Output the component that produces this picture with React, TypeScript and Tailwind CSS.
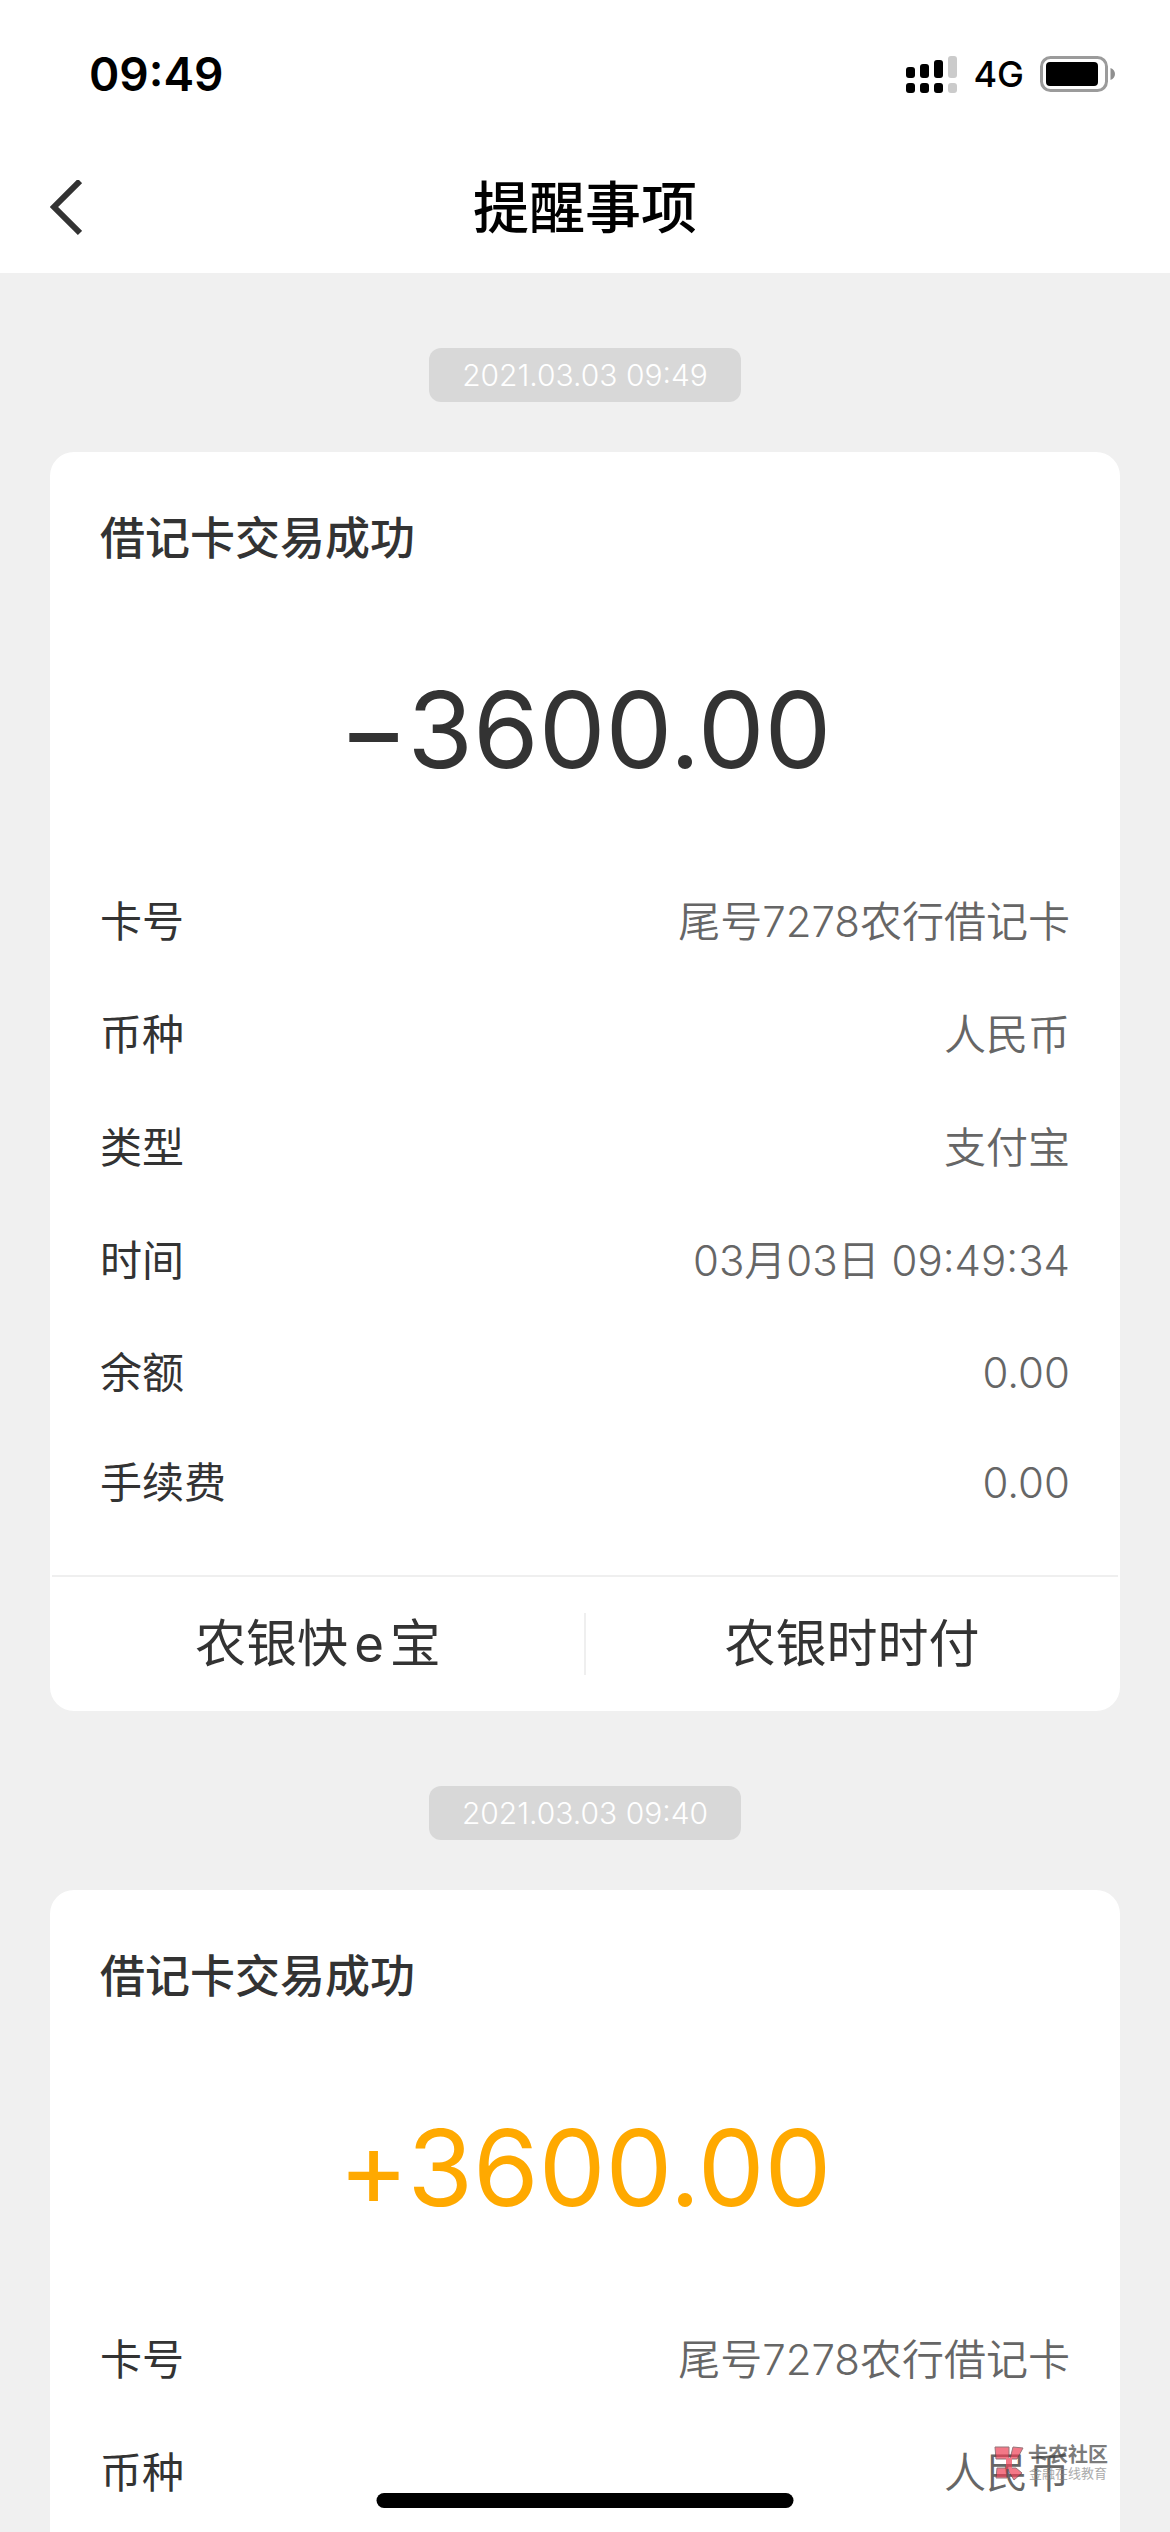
type Message = {
  date: string;
  title: string;
  amount: string;
  income?: boolean;
  rows: [string, string][];
  actions?: string[];
};

const messages: Message[] = [
  {
    date: "2021.03.03 09:49",
    title: "借记卡交易成功",
    amount: "−3600.00",
    rows: [
      ["卡号", "尾号7278农行借记卡"],
      ["币种", "人民币"],
      ["类型", "支付宝"],
      ["时间", "03月03日 09:49:34"],
      ["余额", "0.00"],
      ["手续费", "0.00"],
    ],
    actions: ["农银快e宝", "农银时时付"],
  },
  {
    date: "2021.03.03 09:40",
    title: "借记卡交易成功",
    amount: "+3600.00",
    income: true,
    rows: [
      ["卡号", "尾号7278农行借记卡"],
      ["币种", "人民币"],
    ],
  },
];

function SignalIcon() {
  return (
    <svg width="51" height="37" viewBox="0 0 51 37" aria-hidden="true">
      <rect x="0" y="11" width="9" height="11" rx="3" />
      <rect x="14" y="8" width="9" height="14" rx="3" />
      <rect x="28" y="4" width="9" height="18" rx="3" />
      <rect x="42" y="0" width="9" height="22" rx="3" fill="#cbcbcb" />
      <rect x="0" y="27" width="9" height="10" rx="3" />
      <rect x="14" y="27" width="9" height="10" rx="3" />
      <rect x="28" y="27" width="9" height="10" rx="3" />
      <rect x="42" y="27" width="9" height="10" rx="3" fill="#cbcbcb" />
    </svg>
  );
}

function BatteryIcon() {
  return (
    <svg width="75" height="36" viewBox="0 0 75 36" aria-hidden="true">
      <rect
        x="1.5"
        y="1.5"
        width="65"
        height="33"
        rx="9"
        fill="none"
        stroke="#9b9b9b"
        strokeWidth="3"
      />
      <rect x="6" y="6" width="52" height="24" rx="4" />
      <path d="M70.5 12c3 1 4.500 3.500 4.500 6s-1.500 5-4.500 6z" fill="#8f8f8f" />
    </svg>
  );
}

function StatusBar() {
  return (
    <div className="flex h-[148px] items-center justify-between pl-[89px] pr-[55px] text-black">
      <span className="text-[46px] font-semibold">09:49</span>
      <div className="flex items-center gap-4">
        <SignalIcon />
        <span className="text-[36px] font-medium">4G</span>
        <BatteryIcon />
      </div>
    </div>
  );
}

function NavBar() {
  return (
    <header className="grid h-[125px] grid-cols-[1fr_auto_1fr] items-center px-[50px] pb-1.5">
      <button type="button" aria-label="返回" className="w-8">
        <svg
          width="32"
          height="56"
          viewBox="0 0 32 56"
          fill="none"
          stroke="#333333"
          strokeWidth="6"
          aria-hidden="true"
        >
          <path d="M30 1 4 27l26 26" />
        </svg>
      </button>
      <h1 className="text-[56px] font-medium text-black">提醒事项</h1>
    </header>
  );
}

function ActionLabel({ text }: { text: string }) {
  // latin letters inside a product name get some breathing room
  return text
    .split(/([a-z])/)
    .map((part, i) =>
      i % 2 ? (
        <span key={i} className="px-1.5">
          {part}
        </span>
      ) : (
        part
      )
    );
}

function MessageCard({ message }: { message: Message }) {
  return (
    <section className="shrink-0">
      <div className="flex justify-center pt-[75px] pb-[50px]">
        <time className="flex h-[54px] w-[312px] items-center justify-center rounded-xl bg-[#d8d8d8] text-[30px] font-light text-white">
          {message.date}
        </time>
      </div>
      <article className="rounded-3xl bg-white">
        <div className="px-[50px] pt-[60px] pb-[38px]">
          <h2 className="text-[45px] leading-[54px] font-medium">
            {message.title}
          </h2>
          <p
            className={`mt-[104px] mb-[75px] text-center text-[106px] leading-[120px] [font-feature-settings:'calt'_0] ${
              message.income ? "text-[#ffa900]" : "text-[#333333]"
            }`}
          >
            {message.amount}
          </p>
          <dl className="text-[42px]">
            {message.rows.map(([label, value]) => (
              <div
                key={label}
                className={`flex items-center justify-between ${
                  /^[\d.]+$/.test(value) ? "h-[110px]" : "h-[113px]"
                }`}
              >
                <dt>{label}</dt>
                <dd className="font-[350] text-[#666666]">{value}</dd>
              </div>
            ))}
          </dl>
        </div>
        {message.actions && (
          <div className="mx-0.5 flex h-[136px] items-center border-t-2 border-[#efefef]">
            {message.actions.map((action, i) => (
              <button
                key={action}
                type="button"
                className={`h-[62px] flex-1 text-[51px] leading-[62px] ${
                  i > 0 ? "border-l-2 border-[#efefef]" : ""
                }`}
              >
                <ActionLabel text={action} />
              </button>
            ))}
          </div>
        )}
      </article>
    </section>
  );
}

function Watermark() {
  return (
    <div className="pointer-events-none absolute right-[62px] bottom-[51px] flex items-center gap-1 opacity-70">
      <svg width="30" height="35" viewBox="0 0 30 35" aria-hidden="true">
        <g fill="#ee4055" stroke="#6b3a42">
          <path d="M1 1h14v12H2z" />
          <path d="M19 1l10 1-6 11h-7z" />
          <path d="M3 22h10v10H2z" />
          <path d="M14 22h8l6 5-8 7-5-8z" />
        </g>
        <path d="M12 12h6v11h-6z" fill="#ee4055" />
      </svg>
      <div className="flex flex-col items-center text-[#444444]">
        <span className="text-xl leading-5 font-bold">卡农社区</span>
        <span className="text-[13px] leading-4 text-[#888888]">
          金融在线教育
        </span>
      </div>
    </div>
  );
}

export default function App() {
  return (
    <div className="relative flex h-screen flex-col overflow-hidden bg-[#f0f0f0] font-['Inter','Noto_Sans_CJK_SC',sans-serif] text-[#333333]">
      <div className="shrink-0 bg-white">
        <StatusBar />
        <NavBar />
      </div>
      <main className="flex min-h-0 flex-1 flex-col overflow-hidden px-[50px]">
        {messages.map((message) => (
          <MessageCard key={message.date} message={message} />
        ))}
      </main>
      <Watermark />
      <div className="absolute bottom-6 left-1/2 h-[15px] w-[417px] -translate-x-1/2 rounded-full bg-black" />
    </div>
  );
}
